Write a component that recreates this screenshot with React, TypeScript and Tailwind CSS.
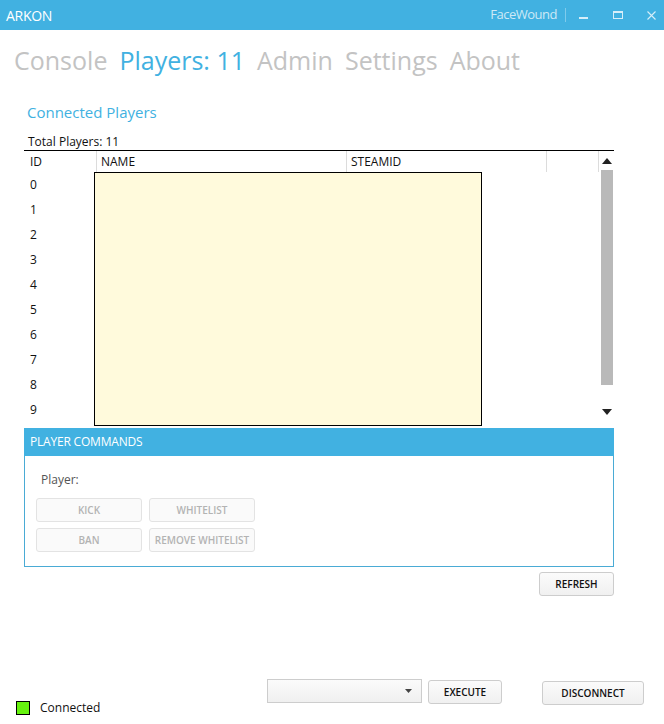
import React from "react";

const font = { fontFamily: '"Open Sans", "Noto Sans", sans-serif' };

function TitleBar() {
  return (
    <div className="h-[30px] bg-[#41b1e1] flex items-center text-white">
      <div className="pl-[6px] text-[14px] tracking-[-0.3px]">ARKON</div>
      <div className="ml-auto flex items-center">
        <span className="text-[13px] text-[#cde9f6] tracking-[-0.5px]">FaceWound</span>
        <div className="ml-[8px] w-px h-[14px] bg-[#7fcbec]" />
        <div className="ml-[13px] w-[9px] h-[2px] mt-[5px] bg-[#d6eef9]" />
        <div className="ml-[25px] w-[10px] h-[8px] border border-t-2 border-[#d6eef9]" />
        <svg className="ml-[24px] mr-[8px]" width="9" height="9" viewBox="0 0 9 9">
          <path d="M0.5 0.5L8.5 8.5M8.5 0.5L0.5 8.5" stroke="#d6eef9" strokeWidth="1.1" />
        </svg>
      </div>
    </div>
  );
}

function Nav() {
  const items = ["Console", "Players: 11", "Admin", "Settings", "About"];
  return (
    <div className="flex gap-[12px] pl-[14px] pt-[12px] h-[63px] text-[25px] leading-[36px] text-[#c3c3c3]">
      {items.map((t) => (
        <span key={t} className={t.startsWith("Players") ? "text-[#41b1e1]" : ""}>
          {t}
        </span>
      ))}
    </div>
  );
}

function GreyButton({ label, w }: { label: string; w: string }) {
  return (
    <div
      className={`${w} h-[24px] flex items-center justify-center rounded-[3px] border border-[#e3e3e3] bg-[#fafafa] text-[10px] font-semibold text-[#b3b3b3]`}
    >
      {label}
    </div>
  );
}

function Button({ label, w, className = "" }: { label: string; w: string; className?: string }) {
  return (
    <div
      className={`${w} h-[24px] flex items-center justify-center rounded-[3px] border border-[#cdcdcd] bg-gradient-to-b from-[#fbfbfb] to-[#f0f0f0] text-[10px] font-semibold text-[#111] ${className}`}
    >
      {label}
    </div>
  );
}

function PlayerTable() {
  const ids = [0, 1, 2, 3, 4, 5, 6, 7, 8, 9];
  return (
    <div className="ml-[24px] w-[590px] flex border-t border-black">
      <div className="flex-1 flex flex-col">
        {/* header */}
        <div className="h-[21px] flex items-center text-[12px] text-[#111]">
          <div className="w-[72px] pl-[6px]">ID</div>
          <div className="w-[250px] h-full flex items-center pl-[4px] border-l border-[#dcdcdc]">NAME</div>
          <div className="w-[200px] h-full flex items-center pl-[4px] border-l border-[#dcdcdc]">STEAMID</div>
          <div className="flex-1 h-full border-l border-[#dcdcdc]" />
          <div className="w-[2px] h-full border-l border-[#dcdcdc]" />
        </div>
        {/* body */}
        <div className="flex h-[255px]">
          <div className="w-[70px] flex flex-col text-[12px] text-[#111]">
            {ids.map((i) => (
              <div key={i} className="h-[25px] pl-[6px] flex items-center">
                {i}
              </div>
            ))}
          </div>
          <div className="w-[388px] h-[254px] bg-[#fffadc] border border-black" />
        </div>
      </div>
      {/* scrollbar */}
      <div className="w-[14px] flex flex-col items-center">
        <div className="h-[19px] flex items-center justify-center">
          <svg width="10" height="6" viewBox="0 0 10 6">
            <path d="M5 0L10 6H0Z" fill="#222" />
          </svg>
        </div>
        <div className="w-[12px] h-[215px] bg-[#b9b9b9]" />
        <div className="flex-1" />
        <div className="h-[16px] mb-[7px] flex items-center justify-center">
          <svg width="10" height="6" viewBox="0 0 10 6">
            <path d="M0 0H10L5 6Z" fill="#222" />
          </svg>
        </div>
      </div>
    </div>
  );
}

function Commands() {
  return (
    <div className="ml-[24px] w-[590px] mt-[1px]">
      <div className="h-[28px] bg-[#41b1e1] flex items-center pl-[6px] text-[12px] text-white tracking-[-0.2px]">
        PLAYER COMMANDS
      </div>
      <div className="h-[111px] border-x border-b border-[#4aabd5] px-[11px] pt-[16px]">
        <div className="pl-[5px] text-[12px] leading-[16px] text-[#555]">Player:</div>
        <div className="mt-[10px] grid grid-cols-[106px_106px] gap-x-[7px] gap-y-[6px]">
          <GreyButton label="KICK" w="w-[106px]" />
          <GreyButton label="WHITELIST" w="w-[106px]" />
          <GreyButton label="BAN" w="w-[106px]" />
          <GreyButton label="REMOVE WHITELIST" w="w-[106px]" />
        </div>
      </div>
    </div>
  );
}

export default function App() {
  return (
    <div className="w-[664px] h-[724px] bg-white flex flex-col overflow-hidden" style={font}>
      <TitleBar />
      <Nav />
      <div className="pl-[27px] mt-[8px] text-[15px] leading-[22px] text-[#41b1e1]">Connected Players</div>
      <div className="pl-[28px] mt-[11px] text-[12px] leading-[16px] text-[#111]">Total Players: 11</div>
      <PlayerTable />
      <Commands />
      <div className="w-[614px] mt-[5px] flex justify-end">
        <Button label="REFRESH" w="w-[75px]" />
      </div>
      <div className="mt-auto h-[45px] flex items-start pl-[16px]">
        <div className="w-[251px] pt-[20px] flex items-center gap-[10px] text-[12px] text-[#111]">
          <div className="w-[14px] h-[14px] bg-[#66f20f] border border-black" />
          <span>Connected</span>
        </div>
        <div className="w-[155px] h-[24px] border border-[#cdcdcd] bg-gradient-to-b from-[#fbfbfb] to-[#f0f0f0] flex items-center justify-end pr-[9px]">
          <svg width="7" height="4" viewBox="0 0 7 4">
            <path d="M0 0H7L3.5 4Z" fill="#444" />
          </svg>
        </div>
        <Button label="EXECUTE" w="w-[74px]" className="ml-[6px] mt-[1px]" />
        <Button label="DISCONNECT" w="w-[102px]" className="ml-[40px] mt-[2px]" />
      </div>
    </div>
  );
}
